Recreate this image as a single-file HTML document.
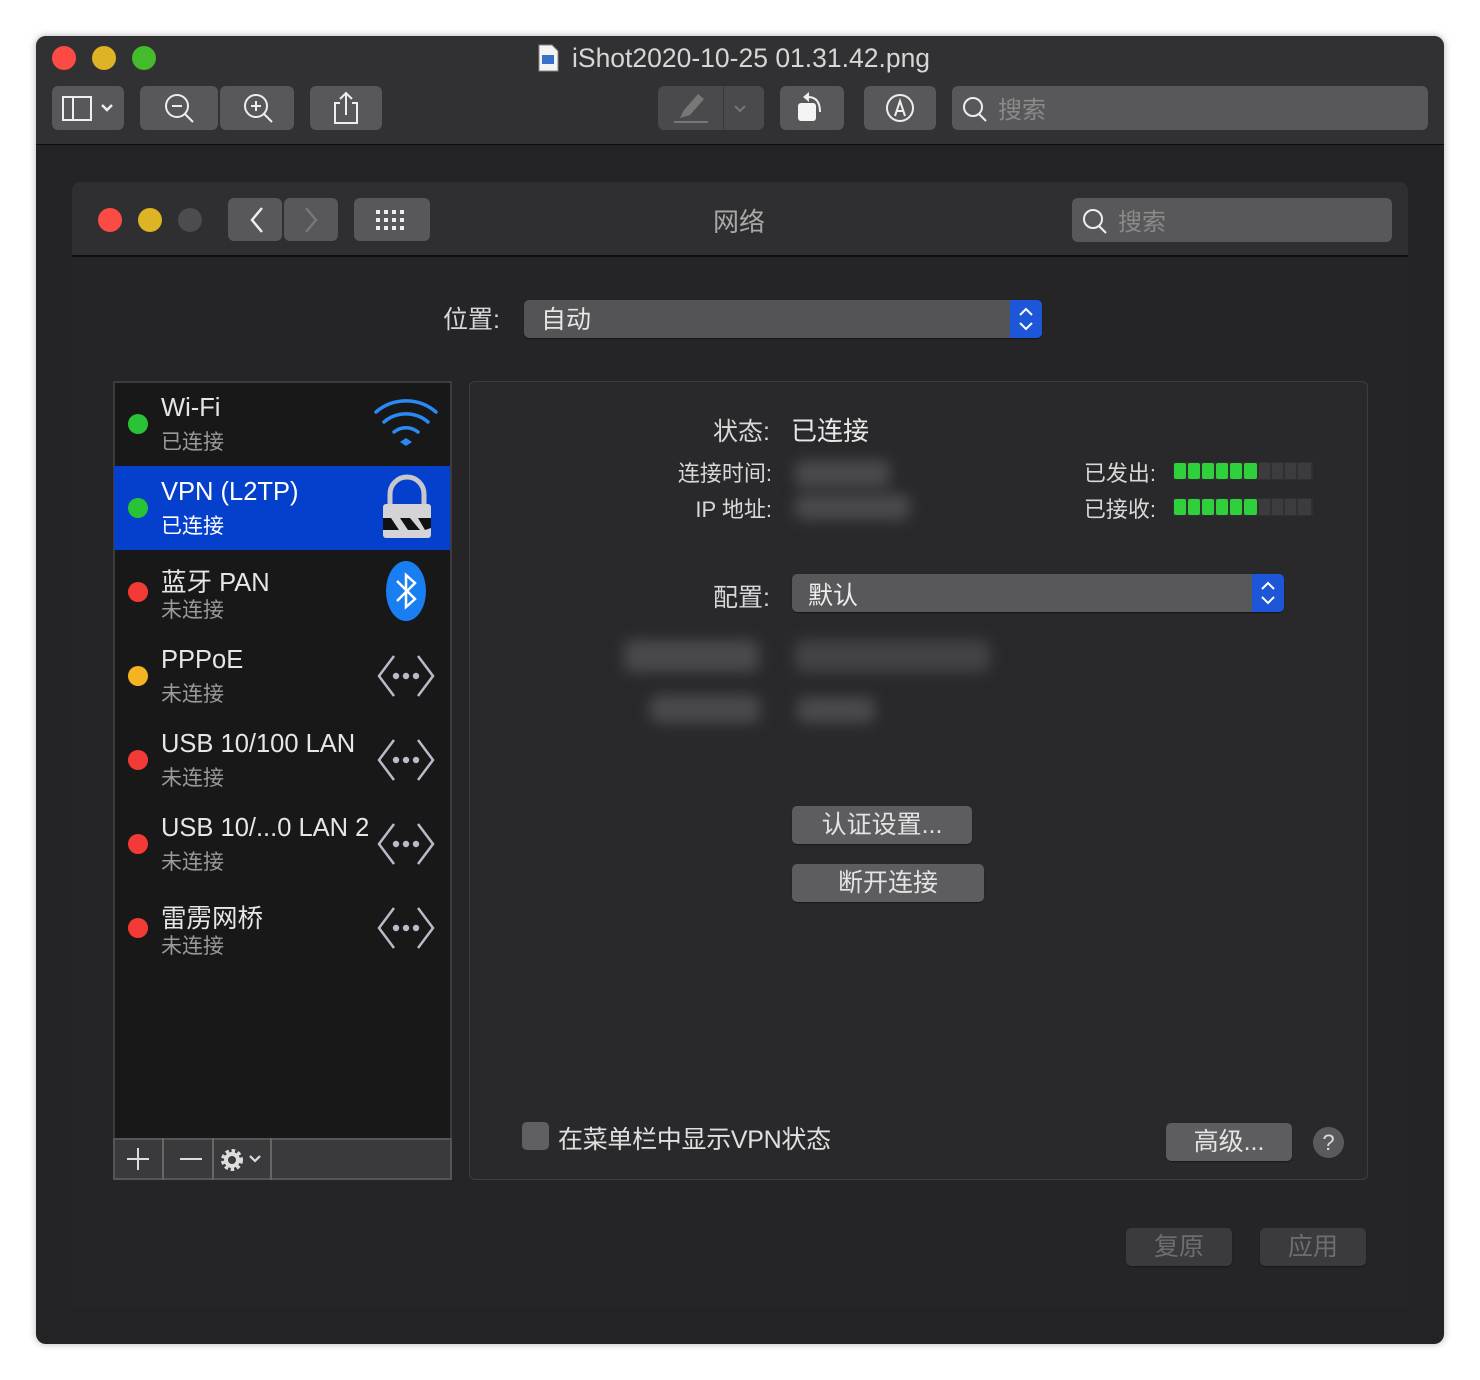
<!DOCTYPE html>
<html><head><meta charset="utf-8"><style>
*{margin:0;padding:0;box-sizing:border-box}
body{width:1480px;height:1380px;background:#fff;position:relative;overflow:hidden;font-family:"Liberation Sans","Noto Sans CJK SC",sans-serif;color:#dcdcdc}
.a{position:absolute}
.btn{position:absolute;background:#58585a;border-radius:6px}
.dot{position:absolute;width:20px;height:20px;border-radius:50%}
.t1{position:absolute;font-size:25.5px;color:#e6e6e6;white-space:nowrap}
.t2{position:absolute;font-size:21px;color:#9a9a9a;white-space:nowrap}
.lbl{position:absolute;font-size:22px;color:#d8d8d8;text-align:right;white-space:nowrap}
.pb{position:absolute;background:#5d5d5f;border-radius:5px;box-shadow:0 1px 1px rgba(0,0,0,.4);color:#e4e4e4;font-size:25px;text-align:center}
.blur{position:absolute;background:#4a4a4c;filter:blur(7px);border-radius:8px}
</style></head><body>
<div class="a" style="left:36px;top:36px;width:1408px;height:1308px;background:#232325;border-radius:10px;overflow:hidden;box-shadow:0 0 8px rgba(0,0,0,.3)">
 <div class="a" style="left:0;top:0;width:1408px;height:109px;background:#313133;border-bottom:1px solid #0c0c0c"></div>
</div>
<div class="dot" style="left:52px;top:46px;width:24px;height:24px;background:#fc4b45"></div>
<div class="dot" style="left:92px;top:46px;width:24px;height:24px;background:#deb324"></div>
<div class="dot" style="left:132px;top:46px;width:24px;height:24px;background:#44bb2b"></div>
<svg class="a" style="left:536px;top:43px" width="24" height="30"><path d="M3 2h13l6 6v20H3z" fill="#f4f4f4" stroke="#888"/><rect x="6" y="12" width="12" height="9" fill="#3a6fc9"/></svg>
<div class="a" style="left:572px;top:43px;font-size:26.5px;color:#d6d6d6">iShot2020-10-25 01.31.42.png</div>
<div class="btn" style="left:52px;top:86px;width:72px;height:44px"></div>
<svg class="a" style="left:60px;top:94px" width="60" height="28"><rect x="3" y="3" width="28" height="23" fill="none" stroke="#eee" stroke-width="2"/><line x1="13" y1="3" x2="13" y2="26" stroke="#eee" stroke-width="2"/><path d="M42 11l5 5 5-5" fill="none" stroke="#eee" stroke-width="2.5"/></svg>
<div class="btn" style="left:140px;top:86px;width:78px;height:44px"></div>
<div class="btn" style="left:220px;top:86px;width:74px;height:44px"></div>
<svg class="a" style="left:160px;top:90px" width="40" height="36"><circle cx="17" cy="16" r="11" fill="none" stroke="#eee" stroke-width="2"/><line x1="25" y1="24" x2="33" y2="32" stroke="#eee" stroke-width="2"/><line x1="12" y1="16" x2="22" y2="16" stroke="#eee" stroke-width="2"/></svg>
<svg class="a" style="left:239px;top:90px" width="40" height="36"><circle cx="17" cy="16" r="11" fill="none" stroke="#eee" stroke-width="2"/><line x1="25" y1="24" x2="33" y2="32" stroke="#eee" stroke-width="2"/><line x1="12" y1="16" x2="22" y2="16" stroke="#eee" stroke-width="2"/><line x1="17" y1="11" x2="17" y2="21" stroke="#eee" stroke-width="2"/></svg>
<div class="btn" style="left:310px;top:86px;width:72px;height:44px"></div>
<svg class="a" style="left:330px;top:90px" width="34" height="36"><path d="M10 13H5v20h22V13h-5" fill="none" stroke="#eee" stroke-width="2"/><path d="M16 25V3M10 9l6-6 6 6" fill="none" stroke="#eee" stroke-width="2"/></svg>
<div class="btn" style="left:658px;top:86px;width:106px;height:44px;background:#4a4a4c"></div>
<div class="a" style="left:723px;top:86px;width:1px;height:44px;background:#3a3a3c"></div>
<svg class="a" style="left:670px;top:90px" width="90" height="36"><path d="M10 28l4-8 14-16 6 5-14 16z" fill="#777"/><line x1="4" y1="32" x2="38" y2="32" stroke="#777" stroke-width="2"/><path d="M65 16l5 5 5-5" fill="none" stroke="#777" stroke-width="2"/></svg>
<div class="btn" style="left:780px;top:86px;width:64px;height:44px"></div>
<svg class="a" style="left:790px;top:88px" width="44" height="40"><rect x="8" y="15" width="18" height="18" rx="3" fill="#f4f4f4"/><path d="M18 9c8 0 12 5 12 15" fill="none" stroke="#eee" stroke-width="2"/><path d="M13 9l6-5v10z" fill="#eee"/></svg>
<div class="btn" style="left:864px;top:86px;width:72px;height:44px"></div>
<svg class="a" style="left:884px;top:92px" width="34" height="34"><circle cx="16" cy="16" r="13" fill="none" stroke="#eee" stroke-width="2"/><path d="M11 24l5-15 5 15M13 19h6" fill="none" stroke="#eee" stroke-width="2"/></svg>
<div class="btn" style="left:952px;top:86px;width:476px;height:44px"></div>
<svg class="a" style="left:960px;top:94px" width="30" height="30"><circle cx="13" cy="13" r="9" fill="none" stroke="#eee" stroke-width="2"/><line x1="19" y1="20" x2="26" y2="27" stroke="#eee" stroke-width="2"/></svg>
<div class="a" style="left:998px;top:90px;font-size:24px;color:#8a8a8a">搜索</div>

<div class="a" style="left:72px;top:182px;width:1336px;height:1126px;background:#252527;border-radius:8px 8px 0 0;overflow:hidden">
 <div class="a" style="left:0;top:0;width:1336px;height:75px;background:#2f2f31;border-bottom:2px solid #0e0e0e"></div>
</div>
<div class="dot" style="left:98px;top:208px;width:24px;height:24px;background:#fc4b45"></div>
<div class="dot" style="left:138px;top:208px;width:24px;height:24px;background:#deb324"></div>
<div class="dot" style="left:178px;top:208px;width:24px;height:24px;background:#4c4c4e"></div>
<div class="btn" style="left:228px;top:198px;width:54px;height:43px"></div>
<div class="btn" style="left:284px;top:198px;width:54px;height:43px"></div>
<svg class="a" style="left:240px;top:202px" width="90" height="36"><path d="M22 6l-10 12 10 12" fill="none" stroke="#eee" stroke-width="2.5"/><path d="M66 6l10 12-10 12" fill="none" stroke="#777" stroke-width="2.5"/></svg>
<div class="btn" style="left:354px;top:198px;width:76px;height:43px"></div>
<svg class="a" style="left:376px;top:210px" width="34" height="22"><g fill="#eee"><rect x="0" y="0" width="4" height="4"/><rect x="8" y="0" width="4" height="4"/><rect x="16" y="0" width="4" height="4"/><rect x="24" y="0" width="4" height="4"/><rect x="0" y="8" width="4" height="4"/><rect x="8" y="8" width="4" height="4"/><rect x="16" y="8" width="4" height="4"/><rect x="24" y="8" width="4" height="4"/><rect x="0" y="16" width="4" height="4"/><rect x="8" y="16" width="4" height="4"/><rect x="16" y="16" width="4" height="4"/><rect x="24" y="16" width="4" height="4"/></g></svg>
<div class="a" style="left:713px;top:202px;font-size:26px;color:#a8a8a8">网络</div>
<div class="btn" style="left:1072px;top:198px;width:320px;height:44px"></div>
<svg class="a" style="left:1080px;top:206px" width="30" height="30"><circle cx="13" cy="13" r="9" fill="none" stroke="#eee" stroke-width="2"/><line x1="19" y1="20" x2="26" y2="27" stroke="#eee" stroke-width="2"/></svg>
<div class="a" style="left:1118px;top:202px;font-size:24px;color:#8a8a8a">搜索</div>

<div class="lbl" style="left:400px;top:300px;width:100px;font-size:25px">位置:</div>
<div class="a" style="left:524px;top:300px;width:518px;height:38px;background:#545456;border-radius:5px;box-shadow:0 1px 1px rgba(0,0,0,.5)"></div>
<div class="a" style="left:1010px;top:300px;width:32px;height:38px;background:#1d56d9;border-radius:0 5px 5px 0"></div>
<svg class="a" style="left:1016px;top:305px" width="20" height="28"><path d="M4 10l6-6 6 6M4 18l6 6 6-6" fill="none" stroke="#fff" stroke-width="2"/></svg>
<div class="a" style="left:541px;top:300px;font-size:25px;color:#e6e6e6">自动</div>

<div class="a" style="left:113px;top:381px;width:339px;height:799px;background:#181819;border:2px solid #3c3c3e"></div>
<div class="a" style="left:114px;top:466px;width:336px;height:84px;background:#0540cc"></div>
<div class="dot" style="left:128px;top:414px;background:#28c436"></div>
<div class="t1" style="left:161px;top:394px">Wi-Fi</div><div class="t2" style="left:161px;top:426px">已连接</div>
<svg class="a" style="left:372px;top:398px" width="68" height="52"><g fill="none" stroke="#2a8af5" stroke-width="3.5" stroke-linecap="round"><path d="M4 14a46 46 0 0 1 60 0"/><path d="M12 24a34 34 0 0 1 44 0"/><path d="M22 34a19 19 0 0 1 24 0"/></g><path d="M28 44l6-4 6 4-6 4z" fill="#2a8af5"/></svg>
<div class="dot" style="left:128px;top:498px;background:#28c436"></div>
<div class="t1" style="left:161px;top:478px;color:#fff">VPN (L2TP)</div><div class="t2" style="left:161px;top:510px;color:#fff">已连接</div>
<svg class="a" style="left:380px;top:474px" width="54" height="68"><path d="M10 30V20a17 17 0 0 1 34 0v10" fill="none" stroke="#c8c8cc" stroke-width="5"/><rect x="3" y="30" width="48" height="34" rx="3" fill="#d4d4d8"/><path d="M3 44h8l8 12H3zM20 44h10l10 12H28zM38 44h13v10L45 56z" fill="#111"/></svg>
<div class="dot" style="left:128px;top:582px;background:#f33a36"></div>
<div class="t1" style="left:161px;top:562px">蓝牙 PAN</div><div class="t2" style="left:161px;top:594px">未连接</div>
<svg class="a" style="left:384px;top:560px" width="44" height="62"><ellipse cx="22" cy="31" rx="20" ry="30" fill="#1a7ef3"/><path d="M13 21l18 18-9 8V15l9 8-18 18" fill="none" stroke="#fff" stroke-width="2.5"/></svg>
<div class="dot" style="left:128px;top:666px;background:#f5b321"></div>
<div class="t1" style="left:161px;top:646px">PPPoE</div><div class="t2" style="left:161px;top:678px">未连接</div>
<div class="dot" style="left:128px;top:750px;background:#f33a36"></div>
<div class="t1" style="left:161px;top:730px">USB 10/100 LAN</div><div class="t2" style="left:161px;top:762px">未连接</div>
<div class="dot" style="left:128px;top:834px;background:#f33a36"></div>
<div class="t1" style="left:161px;top:814px">USB 10/...0 LAN 2</div><div class="t2" style="left:161px;top:846px">未连接</div>
<div class="dot" style="left:128px;top:918px;background:#f33a36"></div>
<div class="t1" style="left:161px;top:898px">雷雳网桥</div><div class="t2" style="left:161px;top:930px">未连接</div>
<svg class="a" style="left:374px;top:654px" width="64" height="300"><defs><g id="e"><path d="M20 2L5 22l15 20M44 2l15 20-15 20" fill="none" stroke="#b8bcc8" stroke-width="2.5"/><circle cx="22" cy="22" r="3.2" fill="#b8bcc8"/><circle cx="32" cy="22" r="3.2" fill="#b8bcc8"/><circle cx="42" cy="22" r="3.2" fill="#b8bcc8"/></g></defs><use href="#e"/><use href="#e" y="84"/><use href="#e" y="168"/><use href="#e" y="252"/></svg>
<div class="a" style="left:113px;top:1138px;width:339px;height:42px;background:#3a3a3c;border:2px solid #555"></div>
<div class="a" style="left:162px;top:1138px;width:2px;height:42px;background:#666"></div>
<div class="a" style="left:212px;top:1138px;width:2px;height:42px;background:#666"></div>
<div class="a" style="left:270px;top:1138px;width:2px;height:42px;background:#666"></div>
<svg class="a" style="left:114px;top:1140px" width="160" height="38"><path d="M24 8v22M13 19h22M66 19h22" stroke="#ddd" stroke-width="2"/><circle cx="118" cy="20" r="8" fill="none" stroke="#ddd" stroke-width="6" stroke-dasharray="3 2.3"/><circle cx="118" cy="20" r="6" fill="none" stroke="#ddd" stroke-width="4"/><path d="M136 16l5 5 5-5" fill="none" stroke="#ddd" stroke-width="2.2"/></svg>

<div class="a" style="left:469px;top:381px;width:899px;height:799px;background:#29292b;border:1px solid #3e3e40;border-radius:6px"></div>
<div class="lbl" style="left:650px;top:412px;width:120px;font-size:25px">状态:</div>
<div class="a" style="left:791px;top:411px;font-size:26px;color:#e8e8e8">已连接</div>
<div class="lbl" style="left:630px;top:456px;width:142px">连接时间:</div>
<div class="lbl" style="left:630px;top:492px;width:142px">IP 地址:</div>
<div class="blur" style="left:795px;top:460px;width:95px;height:28px"></div>
<div class="blur" style="left:795px;top:494px;width:115px;height:26px"></div>
<div class="lbl" style="left:1030px;top:456px;width:126px">已发出:</div>
<div class="lbl" style="left:1030px;top:492px;width:126px">已接收:</div>
<svg class="a" style="left:1173px;top:462px" width="142" height="60"><defs><g id="m"><rect x="0" y="0" width="140" height="18" fill="#303032"/><g fill="#2ed13c"><rect x="1" y="1" width="12" height="16" rx="2"/><rect x="15" y="1" width="12" height="16" rx="2"/><rect x="29" y="1" width="12" height="16" rx="2"/><rect x="43" y="1" width="12" height="16" rx="2"/><rect x="57" y="1" width="12" height="16" rx="2"/><rect x="71" y="1" width="13" height="16" rx="2"/></g><g fill="#3c3c3e"><rect x="86" y="1" width="11" height="16"/><rect x="99" y="1" width="11" height="16"/><rect x="112" y="1" width="11" height="16"/><rect x="125" y="1" width="13" height="16"/></g></g></defs><use href="#m"/><use href="#m" y="36"/></svg>
<div class="lbl" style="left:650px;top:578px;width:120px;font-size:25px">配置:</div>
<div class="a" style="left:792px;top:574px;width:492px;height:38px;background:#58585a;border-radius:5px;box-shadow:0 1px 1px rgba(0,0,0,.5)"></div>
<div class="a" style="left:1252px;top:574px;width:32px;height:38px;background:#1d56d9;border-radius:0 5px 5px 0"></div>
<svg class="a" style="left:1258px;top:579px" width="20" height="28"><path d="M4 10l6-6 6 6M4 18l6 6 6-6" fill="none" stroke="#fff" stroke-width="2"/></svg>
<div class="a" style="left:808px;top:576px;font-size:25px;color:#eee">默认</div>
<div class="blur" style="left:624px;top:640px;width:135px;height:32px"></div>
<div class="blur" style="left:795px;top:640px;width:195px;height:32px;background:#434345"></div>
<div class="blur" style="left:650px;top:695px;width:110px;height:28px"></div>
<div class="blur" style="left:797px;top:697px;width:78px;height:26px"></div>
<div class="pb" style="left:792px;top:806px;width:180px;height:38px;line-height:38px">认证设置...</div>
<div class="pb" style="left:792px;top:864px;width:192px;height:38px;line-height:38px">断开连接</div>
<div class="a" style="left:522px;top:1122px;width:27px;height:28px;background:#606062;border-radius:5px"></div>
<div class="a" style="left:558px;top:1120px;font-size:25px;color:#e0e0e0;letter-spacing:-0.3px">在菜单栏中显示VPN状态</div>
<div class="pb" style="left:1166px;top:1123px;width:126px;height:38px;line-height:38px">高级...</div>
<div class="a" style="left:1313px;top:1127px;width:31px;height:31px;border-radius:50%;background:#5a5a5c;color:#ddd;font-size:22px;text-align:center;line-height:31px">?</div>
<div class="pb" style="left:1126px;top:1228px;width:106px;height:38px;line-height:38px;background:#3b3b3d;color:#6e6e70">复原</div>
<div class="pb" style="left:1260px;top:1228px;width:106px;height:38px;line-height:38px;background:#3b3b3d;color:#6e6e70">应用</div>
</body></html>
